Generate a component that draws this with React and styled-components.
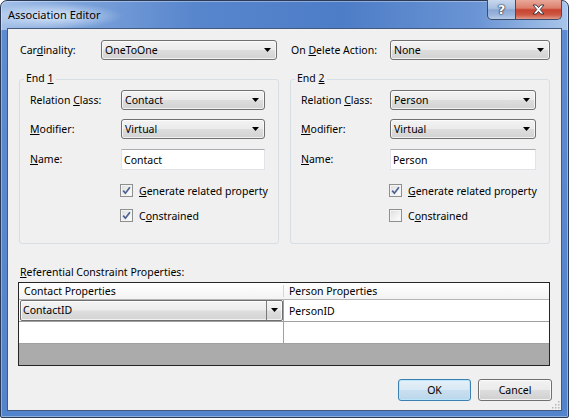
import styled, { createGlobalStyle } from "styled-components";

const GlobalStyle = createGlobalStyle`
  html, body {
    margin: 0;
    padding: 0;
    background: #ffffff;
  }
  body {
    font-family: "Noto Sans", "Liberation Sans", sans-serif;
    font-size: 10.5px;
    color: #000;
  }
`;

const Window = styled.div`
  width: 569px;
  height: 418px;
  box-sizing: border-box;
  display: flex;
  flex-direction: column;
  padding: 0 6px 6px 6px;
  border: 1px solid #2b3b57;
  border-radius: 7px 7px 2px 2px;
  background:
    radial-gradient(ellipse 70px 13px at 52px 15px, rgba(222, 234, 250, 0.95), rgba(222, 234, 250, 0)) no-repeat,
    linear-gradient(90deg, #a4c0e8 0%, #7ba2da 14%, #5886cd 34%, #4d7dc7 60%, #6a94d4 84%, #a9c5ea 100%) top / 100% 29px no-repeat,
    linear-gradient(180deg, #5e8cd1, #5383ca);
  box-shadow: inset 0 0 0 1px rgba(255, 255, 255, 0.35);
`;

const TitleBar = styled.div`
  height: 27px;
  display: flex;
  align-items: flex-start;
`;

const TitleText = styled.span`
  padding-left: 1px;
  line-height: 28px;
  font-size: 11px;
`;

const CaptionButtons = styled.div`
  margin-left: auto;
  margin-top: -1px;
  display: flex;
`;

const CaptionButton = styled.div`
  width: ${(p) => p.$w}px;
  height: 20px;
  box-sizing: border-box;
  border: 1px solid #3a4d6e;
  border-top: none;
  display: flex;
  align-items: center;
  justify-content: center;
  color: #fff;
  font-family: "DejaVu Sans", sans-serif;
  font-weight: bold;
  font-size: 13px;
  text-shadow: 0 0 1px #1d2b44, 0 0 1px #1d2b44, 0 0 2px #1d2b44;
  ${(p) =>
    p.$close
      ? `
    border-left: none;
    border-radius: 0 0 5px 0;
    background: linear-gradient(180deg, #e9a899 0%, #dc806e 42%, #c7432f 52%, #cd5844 78%, #e39a87 100%);
  `
      : `
    border-radius: 0 0 0 5px;
    background: linear-gradient(180deg, #c7d7ed 0%, #a9c0e1 44%, #8aa7d3 52%, #9cb7de 80%, #b6cbe8 100%);
  `}
`;

const Client = styled.div`
  flex: 1;
  position: relative;
  display: flex;
  flex-direction: column;
  padding: 0 11px 0 11px;
  background: #f0f0f0;
  border: 1px solid #43597d;
`;

const TopRow = styled.div`
  margin-top: 11px;
  height: 20px;
  display: flex;
  align-items: center;
`;

const Label = styled.span`
  width: ${(p) => p.$w}px;
  flex: none;
  padding-left: ${(p) => p.$pad || 0}px;
  box-sizing: border-box;
  white-space: nowrap;
`;

const Spacer = styled.span`
  width: ${(p) => p.$w}px;
  flex: none;
`;

const Key = styled.span`
  text-decoration: underline;
  text-underline-offset: 1px;
`;

const ComboBox = styled.div`
  width: ${(p) => (p.$w ? `${p.$w}px` : "auto")};
  height: 20px;
  flex: none;
  box-sizing: border-box;
  display: flex;
  align-items: center;
  padding: 0 5px 0 3px;
  border: 1px solid #707070;
  border-radius: 3px;
  background: linear-gradient(180deg, #f3f3f3 0%, #ebebeb 48%, #dddddd 52%, #d2d2d2 100%);
  box-shadow: inset 0 0 0 1px rgba(255, 255, 255, 0.7);
  white-space: nowrap;
`;

const ComboText = styled.span`
  flex: 1;
`;

const Arrow = styled.svg`
  width: 7px;
  height: 4px;
  flex: none;
`;

function DropArrow() {
  return (
    <Arrow viewBox="0 0 7 4">
      <path d="M0 0 H7 L3.5 4 Z" fill="#000" />
    </Arrow>
  );
}

const Groups = styled.div`
  margin-top: 19px;
  display: grid;
  grid-template-columns: 260px 260px;
  column-gap: 11px;
`;

const GroupBox = styled.div`
  position: relative;
  height: 165px;
  box-sizing: border-box;
  padding: 10px 13px 0 10px;
  border: 1px solid #d5dfe5;
  border-radius: 3px;
`;

const Legend = styled.span`
  position: absolute;
  top: -9px;
  left: 4px;
  padding: 0 2px;
  line-height: 14px;
  background: #f0f0f0;
`;

const Form = styled.div`
  display: grid;
  grid-template-columns: ${(p) => p.$labelWidth}px 1fr;
  grid-template-rows: 20px 21px 21px;
  row-gap: 9px;
  align-items: start;
`;

const FormLabel = styled.span`
  line-height: 20px;
  white-space: nowrap;
`;

const TextBox = styled.div`
  height: 21px;
  box-sizing: border-box;
  display: flex;
  align-items: center;
  padding-left: 2px;
  background: #fff;
  border: 1px solid #e2e3ea;
  border-top-color: #abadb3;
`;

const Checks = styled.div`
  margin-top: 14px;
  margin-left: ${(p) => p.$labelWidth - 1}px;
  display: flex;
  flex-direction: column;
  row-gap: 12px;
`;

const CheckRow = styled.label`
  height: 13px;
  display: flex;
  align-items: center;
  column-gap: 6px;
  white-space: nowrap;
`;

const CheckBox = styled.span`
  width: 13px;
  height: 13px;
  box-sizing: border-box;
  flex: none;
  display: flex;
  align-items: center;
  justify-content: center;
  border: 1px solid #8e8f8f;
  background: linear-gradient(135deg, #dcdcdc 0%, #f2f2f2 60%, #ffffff 100%);
  box-shadow: inset 0 0 0 1px #f4f4f4;
`;

function Check({ checked }) {
  return (
    <CheckBox>
      {checked && (
        <svg width="9" height="9" viewBox="0 0 9 9">
          <path d="M1.2 4.6 L3.4 7.2 L7.9 1.2" fill="none" stroke="#4c628e" strokeWidth="1.7" />
        </svg>
      )}
    </CheckBox>
  );
}

const RefLabel = styled.div`
  margin-top: 21px;
  line-height: 14px;
  margin-bottom: 3px;
  padding-left: 1px;
`;

const Grid = styled.div`
  margin-left: -1px;
  width: 532px;
  height: 84px;
  box-sizing: border-box;
  border: 1px solid #262626;
  background: #ababab;
  display: grid;
  grid-template-columns: 265px 1fr;
  grid-template-rows: 17px 22px 22px;
`;

const HeaderCell = styled.div`
  position: relative;
  display: flex;
  align-items: center;
  padding-left: 5px;
  background: linear-gradient(180deg, #ffffff 0%, #f3f3f3 100%);
  border-bottom: 1px solid #b5b5b5;
  white-space: nowrap;
  ${(p) =>
    p.$sep &&
    `
    &::after {
      content: "";
      position: absolute;
      right: 0;
      top: 2px;
      bottom: 2px;
      width: 1px;
      background: #d5d5d5;
    }
  `}
`;

const Cell = styled.div`
  display: flex;
  align-items: center;
  padding-left: ${(p) => (p.$pad === undefined ? 5 : p.$pad)}px;
  background: #fff;
  border-bottom: 1px solid #a0a0a0;
  border-right: ${(p) => (p.$last ? "none" : "1px solid #a0a0a0")};
  white-space: nowrap;
`;

const CellCombo = styled.div`
  flex: 1;
  height: 21px;
  margin-top: -1px;
  box-sizing: border-box;
  display: flex;
  align-items: stretch;
  border: 1px solid #6f6f6f;
  border-radius: 2px;
  background: linear-gradient(180deg, #f4f4f4 0%, #ececec 48%, #dedede 52%, #d4d4d4 100%);
  box-shadow: inset 0 0 0 1px rgba(255, 255, 255, 0.7);
`;

const CellComboText = styled.span`
  flex: 1;
  display: flex;
  align-items: center;
  padding-left: 2px;
`;

const CellDropButton = styled.span`
  width: 15px;
  display: flex;
  align-items: center;
  justify-content: center;
  border-left: 1px solid #7a7a7a;
`;

const ButtonRow = styled.div`
  margin-top: 13px;
  margin-right: -2px;
  display: flex;
  justify-content: flex-end;
  column-gap: 7px;
`;

const Button = styled.button`
  width: ${(p) => p.$w}px;
  height: 22px;
  box-sizing: border-box;
  padding: 0;
  font: inherit;
  color: #000;
  border-radius: 3px;
  ${(p) =>
    p.$default
      ? `
    border: 1px solid #3c7fb1;
    background: linear-gradient(180deg, #e6f1f9 0%, #d8e8f4 48%, #c8dff0 52%, #bcd6ea 100%);
    box-shadow: inset 0 0 0 1px #b8e6fb;
  `
      : `
    border: 1px solid #707070;
    background: linear-gradient(180deg, #f2f2f2 0%, #ebebeb 48%, #dddddd 52%, #cfcfcf 100%);
    box-shadow: inset 0 0 0 1px rgba(255, 255, 255, 0.75);
  `}
`;

const Grip = styled.svg`
  position: absolute;
  right: 1px;
  bottom: 1px;
  width: 8px;
  height: 8px;
`;

function EndGroup({ title, keyChar, relation, name, labelWidth, generate, constrained }) {
  return (
    <GroupBox>
      <Legend>
        {title} <Key>{keyChar}</Key>
      </Legend>
      <Form $labelWidth={labelWidth}>
        <FormLabel>
          Relation <Key>C</Key>lass:
        </FormLabel>
        <ComboBox>
          <ComboText>{relation}</ComboText>
          <DropArrow />
        </ComboBox>
        <FormLabel>
          <Key>M</Key>odifier:
        </FormLabel>
        <ComboBox>
          <ComboText>Virtual</ComboText>
          <DropArrow />
        </ComboBox>
        <FormLabel>
          <Key>N</Key>ame:
        </FormLabel>
        <TextBox>{name}</TextBox>
      </Form>
      <Checks $labelWidth={labelWidth}>
        <CheckRow>
          <Check checked={generate} />
          <span>
            <Key>G</Key>enerate related property
          </span>
        </CheckRow>
        <CheckRow>
          <Check checked={constrained} />
          <span>
            C<Key>o</Key>nstrained
          </span>
        </CheckRow>
      </Checks>
    </GroupBox>
  );
}

export default function App() {
  return (
    <>
      <GlobalStyle />
      <Window>
        <TitleBar>
          <TitleText>Association Editor</TitleText>
          <CaptionButtons>
            <CaptionButton $w={29}>?</CaptionButton>
            <CaptionButton $w={46} $close>
              <svg width="13" height="11" viewBox="0 0 13 11">
                <path
                  d="M1 1 H4.3 L6.5 3.6 L8.7 1 H12 L8.2 5.5 L12 10 H8.7 L6.5 7.4 L4.3 10 H1 L4.8 5.5 Z"
                  fill="#fff"
                  stroke="#2a2f3d"
                  strokeWidth="0.9"
                  strokeLinejoin="round"
                />
              </svg>
            </CaptionButton>
          </CaptionButtons>
        </TitleBar>
        <Client>
          <TopRow>
            <Label $w={82} $pad={1}>
              Car<Key>d</Key>inality:
            </Label>
            <ComboBox $w={176}>
              <ComboText>OneToOne</ComboText>
              <DropArrow />
            </ComboBox>
            <Spacer $w={14} />
            <Label $w={99}>
              On <Key>D</Key>elete Action:
            </Label>
            <ComboBox $w={160}>
              <ComboText>None</ComboText>
              <DropArrow />
            </ComboBox>
          </TopRow>
          <Groups>
            <EndGroup
              title="End"
              keyChar="1"
              relation="Contact"
              name="Contact"
              labelWidth={91}
              generate
              constrained
            />
            <EndGroup
              title="End"
              keyChar="2"
              relation="Person"
              name="Person"
              labelWidth={89}
              generate
              constrained={false}
            />
          </Groups>
          <RefLabel>
            <Key>R</Key>eferential Constraint Properties:
          </RefLabel>
          <Grid>
            <HeaderCell $sep>Contact Properties</HeaderCell>
            <HeaderCell>Person Properties</HeaderCell>
            <Cell $pad={1}>
              <CellCombo>
                <CellComboText>ContactID</CellComboText>
                <CellDropButton>
                  <DropArrow />
                </CellDropButton>
              </CellCombo>
            </Cell>
            <Cell $last>PersonID</Cell>
            <Cell />
            <Cell $last />
          </Grid>
          <ButtonRow>
            <Button $w={73} $default>
              OK
            </Button>
            <Button $w={74}>Cancel</Button>
          </ButtonRow>
          <Grip viewBox="0 0 8 8">
            <rect x="6" y="0" width="1.5" height="1.5" fill="#b8b8b8" />
            <rect x="3" y="3" width="1.5" height="1.5" fill="#b8b8b8" />
            <rect x="6" y="3" width="1.5" height="1.5" fill="#b8b8b8" />
            <rect x="0" y="6" width="1.5" height="1.5" fill="#b8b8b8" />
            <rect x="3" y="6" width="1.5" height="1.5" fill="#b8b8b8" />
            <rect x="6" y="6" width="1.5" height="1.5" fill="#b8b8b8" />
          </Grip>
        </Client>
      </Window>
    </>
  );
}
